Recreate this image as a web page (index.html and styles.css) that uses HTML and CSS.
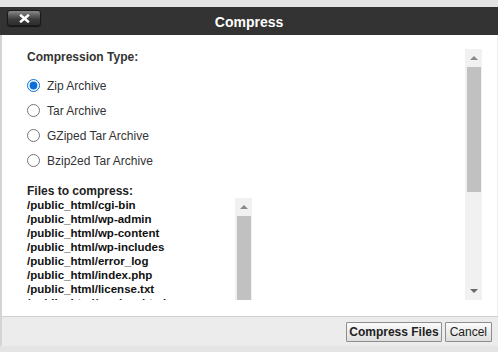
FILE: index.html
```html
<!DOCTYPE html>
<html>
<head>
<meta charset="utf-8">
<link rel="stylesheet" href="styles.css">
</head>
<body>
<div class="dialog">
  <div class="titlebar">
    <button class="close" type="button" aria-label="Close">
      <svg width="11" height="9" viewBox="0 0 11 9"><path d="M2 1.5 L9 7.5 M9 1.5 L2 7.5" stroke="#fff" stroke-width="2.4" stroke-linecap="square"/></svg>
    </button>
    <div class="title">Compress</div>
  </div>
  <div class="content">
    <div class="pane">
      <div class="heading">Compression Type:</div>
      <div class="options">
        <label class="opt"><input type="radio" name="t" checked><span>Zip Archive</span></label>
        <label class="opt"><input type="radio" name="t"><span>Tar Archive</span></label>
        <label class="opt"><input type="radio" name="t"><span>GZiped Tar Archive</span></label>
        <label class="opt"><input type="radio" name="t"><span>Bzip2ed Tar Archive</span></label>
      </div>
      <div class="files">
        <div class="files-title">Files to compress:</div>
        <div class="listbox">
          <div class="list">
            <div>/public_html/cgi-bin</div>
            <div>/public_html/wp-admin</div>
            <div>/public_html/wp-content</div>
            <div>/public_html/wp-includes</div>
            <div>/public_html/error_log</div>
            <div>/public_html/index.php</div>
            <div>/public_html/license.txt</div>
            <div>/public_html/readme.html</div>
          </div>
          <div class="sb sb-small">
            <div class="sb-btn"><span class="arr up"></span></div>
            <div class="sb-thumb grow"></div>
          </div>
        </div>
      </div>
    </div>
    <div class="sb sb-main">
      <div class="sb-btn"><span class="arr up"></span></div>
      <div class="sb-thumb main-thumb"></div>
      <div class="sb-track"></div>
      <div class="sb-btn"><span class="arr down"></span></div>
    </div>
  </div>
  <div class="footer">
    <button class="btn primary" type="button">Compress Files</button>
    <button class="btn" type="button">Cancel</button>
  </div>
</div>
</body>
</html>
```
FILE: styles.css
```css
html, body {
  margin: 0;
  padding: 0;
}
body {
  background: #e4e4e4;
  font-family: "Liberation Sans", Arial, sans-serif;
  font-size: 12px;
  color: #222;
  width: 498px;
  height: 352px;
  overflow: hidden;
}
.dialog {
  margin-top: 7px;
  display: flex;
  flex-direction: column;
}
.titlebar {
  height: 28px;
  background: #333333;
  display: flex;
  align-items: center;
  position: relative;
}
.close {
  position: absolute;
  left: 7px;
  top: 3px;
  width: 34px;
  height: 16px;
  padding: 0;
  border: 1px solid #1a1a1a;
  border-radius: 3px;
  background: linear-gradient(#8a8a8a 0%, #5a5a5a 35%, #3a3a3a 60%, #2e2e2e 100%);
  box-shadow: 0 1px 1px rgba(0,0,0,0.6);
  display: flex;
  align-items: center;
  justify-content: center;
}
.close svg { display: block; }
.title {
  flex: 1;
  text-align: center;
  color: #fff;
  font-weight: bold;
  font-size: 14px;
  padding-top: 1px;
}
.content {
  height: 267px;
  background: #fff;
  border-left: 2px solid #d4d4d4;
  border-right: 1px solid #f0f0f0;
  padding-top: 14px;
  padding-right: 15px;
  display: flex;
  align-items: flex-start;
}
.pane {
  flex: 1;
  height: 251px;
  overflow: hidden;
  padding-left: 25px;
}
.heading {
  font-weight: bold;
  line-height: 14px;
  margin-top: 1px;
  color: #333;
}
.options {
  margin-top: 15px;
  display: flex;
  flex-direction: column;
  gap: 12px;
}
.opt {
  display: flex;
  align-items: center;
  height: 13px;
  gap: 7px;
  color: #333;
}
.opt input {
  margin: 0;
  width: 13px;
  height: 13px;
  accent-color: #0a6fd8;
}
.files {
  margin-top: 17px;
}
.files-title {
  font-weight: bold;
  line-height: 14px;
  color: #222;
}
.listbox {
  width: 225px;
  display: flex;
}
.list {
  flex: 1;
  font-weight: bold;
  font-size: 11.5px;
  line-height: 14px;
  color: #111;
  white-space: nowrap;
}
.sb {
  display: flex;
  flex-direction: column;
  background: #f1f1f1;
  width: 17px;
}
.sb-main {
  height: 251px;
}
.sb-small {
  height: 110px;
}
.sb-btn {
  height: 18px;
  display: flex;
  align-items: center;
  justify-content: center;
  flex: none;
}
.arr {
  width: 0;
  height: 0;
  border-left: 4px solid transparent;
  border-right: 4px solid transparent;
}
.arr.up { border-bottom: 4px solid #8a8a8a; }
.arr.down { border-top: 4px solid #6a6a6a; }
.sb-thumb {
  margin: 0 1px 0 2px;
  background: #c1c1c1;
}
.main-thumb { height: 125px; }
.grow { flex: 1; }
.sb-track { flex: 1; }
.footer {
  border-top: 1px solid #cfcfcf;
  border-left: 2px solid #d4d4d4;
  background: #ececec;
  display: flex;
  justify-content: flex-end;
  align-items: flex-start;
  padding-top: 5px;
  padding-right: 6px;
  gap: 3px;
  box-sizing: border-box;
  height: 30px;
}
.btn {
  height: 20px;
  padding: 0 4px;
  font-family: "Liberation Sans", Arial, sans-serif;
  font-size: 12px;
  color: #222;
  border: 1px solid #8e8e8e;
  background: linear-gradient(#fbfbfb, #dedede);
  border-radius: 1px;
}
.btn.primary {
  font-weight: bold;
  padding: 0 2px;
}
```
